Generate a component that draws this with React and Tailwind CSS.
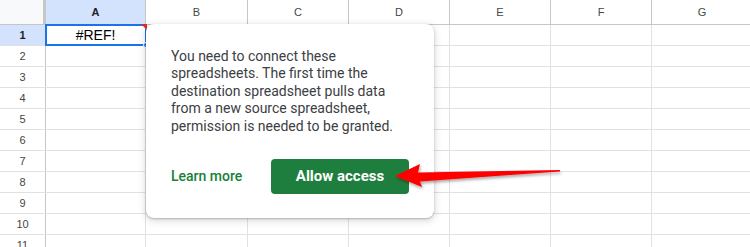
import React from 'react';

const cols = [
  { label: 'A', w: 'w-[100px]' },
  { label: 'B', w: 'w-[102px]' },
  { label: 'C', w: 'w-[101px]' },
  { label: 'D', w: 'w-[101px]' },
  { label: 'E', w: 'w-[101px]' },
  { label: 'F', w: 'w-[101px]' },
  { label: 'G', w: 'w-[101px]' },
];

const rows = [1, 2, 3, 4, 5, 6, 7, 8, 9, 10, 11];

const App = () => {
  return (
    <div className="relative w-[750px] h-[247px] overflow-hidden bg-white font-['Liberation_Sans',Arial,sans-serif]">
      {/* Column headers */}
      <div className="flex h-[25px] border-b border-[#c4c7c5]">
        <div className="w-[46px] shrink-0 bg-[#f8f9fa] border-r-[3px] border-[#c4c7c5]" />
        {cols.map((c) => (
          <div
            key={c.label}
            className={`${c.w} shrink-0 flex items-center justify-center text-[11px] border-r border-[#c4c7c5] ${
              c.label === 'A' ? 'bg-[#d3e3fd] font-bold text-[#1f1f1f]' : 'text-[#444746]'
            }`}
          >
            {c.label}
          </div>
        ))}
      </div>

      {/* Rows */}
      {rows.map((r) => (
        <div key={r} className="flex h-[21px] border-b border-[#e1e1e1]">
          <div
            className={`w-[46px] shrink-0 flex items-center justify-center text-[11px] border-r border-[#c4c7c5] ${
              r === 1 ? 'bg-[#d3e3fd] font-bold text-[#1f1f1f]' : 'text-[#444746]'
            }`}
          >
            {r}
          </div>
          {cols.map((c) => (
            <div key={c.label} className={`${c.w} shrink-0 border-r border-[#e1e1e1] flex items-center justify-center text-[14px] text-black`}>
              {r === 1 && c.label === 'A' ? '#REF!' : ''}
            </div>
          ))}
        </div>
      ))}

      {/* Selected cell A1 */}
      <div className="absolute left-[45px] top-[24px] w-[102px] h-[22px] border-2 border-[#1a73e8]" />
      <div className="absolute left-[141px] top-[24px] w-0 h-0 border-l-[6px] border-l-transparent border-t-[6px] border-t-[#d93025]" />
      <div className="absolute left-[143px] top-[42px] w-[6px] h-[6px] rounded-full bg-[#1a73e8] border border-white" />

      {/* Popup */}
      <div className="absolute left-[146px] top-[24px] w-[288px] h-[194px] bg-white rounded-[8px] shadow-[0_2px_6px_2px_rgba(60,64,67,0.15),0_1px_2px_rgba(60,64,67,0.3)] px-[25px] pt-[24px] pb-[24px] flex flex-col justify-between font-['Roboto',sans-serif]">
        <p className="text-[14px] leading-[17.4px] text-[#3c4043]">
          You need to connect these spreadsheets. The first time the destination spreadsheet pulls data from a new source spreadsheet, permission is needed to be granted.
        </p>
        <div className="flex items-center justify-between">
          <span className="text-[14px] font-medium text-[#188038]">Learn more</span>
          <button className="w-[138px] h-[35px] rounded-[4px] bg-[#1e7e3e] text-white text-[15px] font-bold">
            Allow access
          </button>
        </div>
      </div>

      {/* Arrow */}
      <svg className="absolute left-[390px] top-[155px]" width="175" height="40" viewBox="0 0 175 40">
        <defs>
          <filter id="sh" x="-10%" y="-30%" width="120%" height="160%">
            <feDropShadow dx="1" dy="2" stdDeviation="1.5" floodColor="#000" floodOpacity="0.35" />
          </filter>
        </defs>
        <path
          d="M5 21 L30 9 L28 17.5 L170 15 L170 16.5 L30 26.5 L32 32 Z"
          fill="#ff0000"
          filter="url(#sh)"
        />
      </svg>
    </div>
  );
};

export default App;
